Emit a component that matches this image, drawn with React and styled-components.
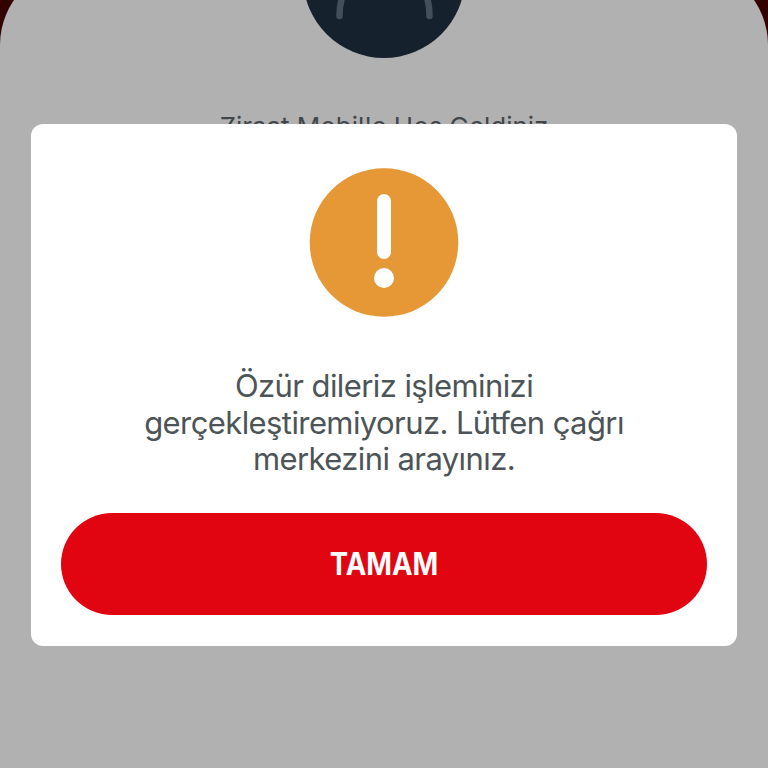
import React from 'react';
import styled, { createGlobalStyle } from 'styled-components';

const GlobalStyles = createGlobalStyle`
  :root {
    --red: #e10512;
    --orange: #e69736;
    --sheet: #b1b1b1;
    --navy: #15212c;
    --text: #4d5457;
  }
  * {
    margin: 0;
    padding: 0;
    box-sizing: border-box;
  }
  body {
    font-family: Inter, 'Noto Sans', sans-serif;
    overflow: hidden;
  }
`;

const ScreenStyles = styled.main`
  position: relative;
  width: 768px;
  height: 768px;
  overflow: hidden;
  background: #330000;
`;

const Sheet = styled.section`
  display: flex;
  flex-direction: column;
  align-items: center;
  height: 810px;
  margin-top: -34px;
  border-radius: 79px 79px 0 0;
  background: var(--sheet);
`;

const Avatar = styled.svg`
  display: block;
  flex-shrink: 0;
  width: 162px;
  height: 162px;
  margin-top: -70px;

  circle {
    fill: var(--navy);
  }
  path {
    fill: none;
    stroke: #42505d;
    stroke-width: 6.5;
    stroke-linecap: round;
  }
`;

const Welcome = styled.h1`
  margin-top: 51px;
  font-size: 26px;
  line-height: 36px;
  font-weight: 400;
  letter-spacing: -0.05px;
  white-space: nowrap;
  color: #42464a;
`;

const Overlay = styled.div`
  position: absolute;
  inset: 0;
  display: flex;
  justify-content: center;
  align-items: flex-start;
  padding-top: 124px;
`;

const Dialog = styled.div`
  display: flex;
  flex-direction: column;
  align-items: center;
  width: 706px;
  height: 522px;
  padding: 44px 30px 31px;
  border-radius: 12px;
  background: #fff;
`;

const WarningIcon = styled.svg`
  display: block;
  width: 150px;
  height: 149px;
  fill: #fff;

  .warning__disc {
    fill: var(--orange);
  }
`;

const Message = styled.p`
  margin-top: 51px;
  font-size: 31px;
  line-height: 36.5px;
  font-weight: 400;
  letter-spacing: -0.59px;
  text-align: center;
  white-space: nowrap;
  color: var(--text);
`;

const Line = styled.span`
  display: block;
`;

const Button = styled.button`
  width: 100%;
  height: 102px;
  margin-top: auto;
  padding-bottom: 2px;
  border: none;
  border-radius: 51px;
  background: var(--red);
  color: #fff;
  font-family: inherit;
  font-size: 31px;
  font-weight: 700;
  cursor: pointer;
`;

const ButtonLabel = styled.span`
  display: inline-block;
  transform: scaleX(0.89);
`;

const message = [
  'Özür dileriz işleminizi',
  'gerçekleştiremiyoruz. Lütfen çağrı',
  'merkezini arayınız.',
];

export default function App() {
  return (
    <ScreenStyles>
      <GlobalStyles />
      <Sheet>
        <Avatar viewBox="0 0 162 162" aria-hidden="true">
          <circle cx="81" cy="81" r="81" />
          <path d="M36.5 120C36.5 89 55 71 81.5 71S126.5 89 126.5 120" />
        </Avatar>
        <Welcome>Ziraat Mobil'e Hoş Geldiniz</Welcome>
      </Sheet>
      <Overlay>
        <Dialog role="alertdialog">
          <WarningIcon viewBox="0 0 150 149" aria-hidden="true">
            <circle className="warning__disc" cx="75" cy="74.5" r="74.3" />
            <rect x="68" y="26" width="14" height="65" rx="7" />
            <circle cx="75" cy="110" r="10" />
          </WarningIcon>
          <Message>
            {message.map((line) => (
              <Line key={line}>{line}</Line>
            ))}
          </Message>
          <Button type="button">
            <ButtonLabel>TAMAM</ButtonLabel>
          </Button>
        </Dialog>
      </Overlay>
    </ScreenStyles>
  );
}
